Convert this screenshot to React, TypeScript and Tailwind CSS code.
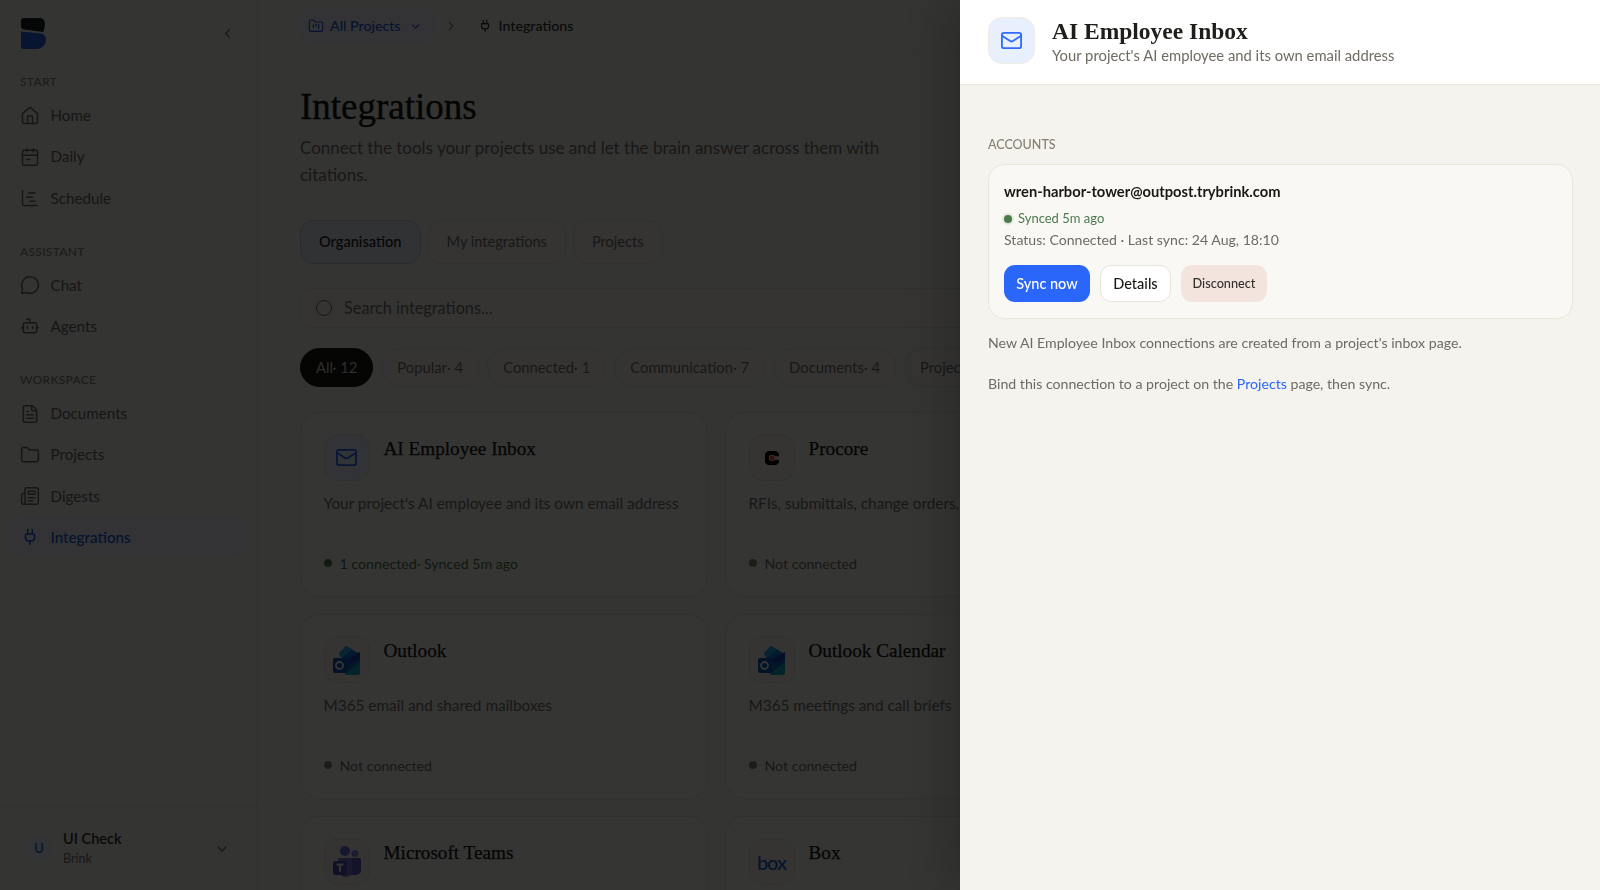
import {
  Bot,
  ChartGantt,
  ChevronDown,
  ChevronLeft,
  ChevronRight,
  FileText,
  Folder,
  FolderKanban,
  House,
  Mail,
  MessageCircle,
  Newspaper,
  Plug,
} from "lucide-react";
import type { ReactNode } from "react";

const sans = "font-['Lato','Liberation_Sans',sans-serif]";
const serif = "font-['Liberation_Serif',serif]";

function DailyIcon({ className }: { className?: string }) {
  return (
    <svg viewBox="0 0 24 24" fill="none" stroke="currentColor" strokeWidth="1.800" strokeLinecap="round" strokeLinejoin="round" className={className}>
      <path d="M8 2v4" />
      <path d="M16 2v4" />
      <rect x="3" y="4" width="18" height="18" rx="2" />
      <path d="M3 10h18" />
      <path d="M8 15h4" />
    </svg>
  );
}

function Logo() {
  return (
    <svg viewBox="0 0 25 31" className="h-[31px] w-[25px]">
      <path d="M3 0h15c3.500 0 6 2 6 5.500 0 3-1 6-1.500 8.500L3 11.500C1 11 0 10 0 8V3c0-2 1-3 3-3z" fill="#1a1d26" />
      <path d="M0 13.500 20 15.500c3 .5 5 3 5 6 0 5-4 9.500-9 9.500H2c-1.200 0-2-.8-2-2z" fill="#2b5fe0" />
    </svg>
  );
}

function OutlookLogo() {
  return (
    <svg viewBox="0 0 28 30" className="h-[30px] w-[28px]">
      <path d="M13 1 25 8v6L11 16 6 9z" fill="#0f78d4" />
      <path d="M6 8 13 1l6 3.500L9 13z" fill="#28a8ea" />
      <path d="M10 16 27 7v21H6z" fill="#0f6cbd" />
      <path d="M14 15 27 7v6L16 20z" fill="#1b3fc0" />
      <path d="M12 29 27 17v11a2 2 0 0 1-2 2H12z" fill="#14a7c9" />
      <rect x="0" y="13" width="14" height="15" rx="2" fill="#1257b8" />
      <circle cx="6.500" cy="20.500" r="3.500" fill="none" stroke="#fff" strokeWidth="1.800" />
    </svg>
  );
}

function TeamsLogo() {
  return (
    <svg viewBox="0 0 28 32" className="h-[32px] w-[28px]">
      <circle cx="12" cy="5" r="5" fill="#6d6fd2" />
      <circle cx="22" cy="7.500" r="3.500" fill="#8486e0" />
      <path d="M17 12h9a2 2 0 0 1 2 2v10a5 5 0 0 1-5 5h-6z" fill="#5a5cc4" />
      <path d="M5 12h14v13a6 6 0 0 1-6 6 8 8 0 0 1-8-8z" fill="#7577d8" />
      <rect x="0" y="15" width="14" height="14" rx="2" fill="#4b4db8" />
      <path d="M3.500 18.500h7M7 18.500v7.500" stroke="#fff" strokeWidth="1.800" fill="none" />
    </svg>
  );
}

function ProcoreLogo() {
  return (
    <svg viewBox="0 0 16 16" className="h-[14px] w-[14px]">
      <path d="M3 0h10l3 3v3h-4.500L10 4.500H6L4.500 6v4L6 11.500h4L11.500 10H16v3l-3 3H3l-3-3V3z" fill="#000" />
      <circle cx="8" cy="8" r="3" fill="#f0562a" />
    </svg>
  );
}

const sections = [
  {
    label: "Start",
    items: [
      { name: "Home", icon: <House className="h-[20px] w-[20px]" strokeWidth={1.8} /> },
      { name: "Daily", icon: <DailyIcon className="h-[20px] w-[20px]" /> },
      { name: "Schedule", icon: <ChartGantt className="h-[20px] w-[20px]" strokeWidth={1.8} /> },
    ],
  },
  {
    label: "Assistant",
    items: [
      { name: "Chat", icon: <MessageCircle className="h-[20px] w-[20px]" strokeWidth={1.8} /> },
      { name: "Agents", icon: <Bot className="h-[20px] w-[20px]" strokeWidth={1.8} /> },
    ],
  },
  {
    label: "Workspace",
    items: [
      { name: "Documents", icon: <FileText className="h-[20px] w-[20px]" strokeWidth={1.8} /> },
      { name: "Projects", icon: <Folder className="h-[20px] w-[20px]" strokeWidth={1.8} /> },
      { name: "Digests", icon: <Newspaper className="h-[20px] w-[20px]" strokeWidth={1.8} /> },
      { name: "Integrations", icon: <Plug className="h-[18px] w-[18px]" strokeWidth={2} />, active: true },
    ],
  },
];

const tabs = ["Organisation", "My integrations", "Projects"];
const chips = ["All· 12", "Popular· 4", "Connected· 1", "Communication· 7", "Documents· 4", "Projects"];

type Integration = { name: string; desc?: string; status?: string; connected?: boolean; icon: ReactNode; tint?: string };

const integrations: Integration[] = [
  {
    name: "AI Employee Inbox",
    desc: "Your project's AI employee and its own email address",
    status: "1 connected· Synced 5m ago",
    connected: true,
    tint: "bg-[#e8effd]",
    icon: <Mail className="h-[23px] w-[23px] text-[#2563f5]" strokeWidth={1.8} />,
  },
  {
    name: "Procore",
    desc: "RFIs, submittals, change orders,",
    status: "Not connected",
    icon: <ProcoreLogo />,
  },
  {
    name: "Outlook",
    desc: "M365 email and shared mailboxes",
    status: "Not connected",
    icon: <OutlookLogo />,
  },
  {
    name: "Outlook Calendar",
    desc: "M365 meetings and call briefs",
    status: "Not connected",
    icon: <OutlookLogo />,
  },
  {
    name: "Microsoft Teams",
    icon: <TeamsLogo />,
  },
  {
    name: "Box",
    icon: <span className={`${sans} text-[20px] font-medium leading-none tracking-[-1px] text-[#1a5fd0]`}>box</span>,
  },
];

function Sidebar() {
  return (
    <aside className="flex h-full w-[258px] shrink-0 flex-col border-r border-[#e4e0d6] bg-[#f6f4ef]">
      <div className="flex h-[66px] items-start justify-between pl-[21px] pr-[22px] pt-[18px]">
        <Logo />
        <ChevronLeft className="mt-[8px] h-[15px] w-[15px] text-[#77736a]" />
      </div>
      <nav className="flex-1 px-[9px] pt-[8px]">
        {sections.map((s) => (
          <div key={s.label} className="mb-[25px]">
            <div className="mb-[5px] h-[16px] pl-[11px] text-[12px] font-medium uppercase leading-[16px] tracking-[0.3px] text-[#8b8679]">{s.label}</div>
            {s.items.map((it) => (
              <div
                key={it.name}
                className={`flex h-[41.200px] items-center gap-[11px] rounded-[14px] pl-[10.500px] text-[15.200px] ${
                  "active" in it && it.active ? "bg-[#eff2f9] font-medium text-[#2455d8]" : "text-[#6f6b62]"
                }`}
              >
                <span className="flex w-[20px] justify-center">{it.icon}</span>
                {it.name}
              </div>
            ))}
          </div>
        ))}
      </nav>
      <div className="flex h-[84px] items-center border-t border-[#e9e5db] pl-[26px] pr-[27px]">
        <div className="flex h-[26px] w-[26px] items-center justify-center rounded-full bg-[#eaeefa] text-[13px] font-medium text-[#2455d8]">U</div>
        <div className="ml-[11px] flex-1">
          <div className="text-[14.500px] font-semibold leading-[20px] text-[#33312c]">UI Check</div>
          <div className="text-[12.500px] leading-[20px] text-[#77736a]">Brink</div>
        </div>
        <ChevronDown className="h-[16px] w-[16px] text-[#6f6b62]" />
      </div>
    </aside>
  );
}

function IntegrationCard({ item }: { item: Integration }) {
  return (
    <div className="flex h-[185px] flex-col rounded-[20px] border border-[#e4e0d6] bg-[#fbf9f6] px-[22.500px] pt-[21px]">
      <div className="flex gap-[14px]">
        <div className={`flex h-[47px] w-[46px] items-center justify-center rounded-[14px] border border-[#e8e4da] ${item.tint ?? "bg-[#f7f5f0]"}`}>{item.icon}</div>
        <div className={`${serif} pt-[3px] text-[19.200px] leading-[24px] text-[#191814] [-webkit-text-stroke:0.25px_#191814]`}>{item.name}</div>
      </div>
      {item.desc && <p className="mt-[11px] whitespace-nowrap text-[15.350px] leading-[22px] text-[#77736a]">{item.desc}</p>}
      {item.status && (
        <div className={`mt-auto mb-[22px] flex items-center gap-[8px] text-[14.200px] ${item.connected ? "text-[#4b7a4d]" : "text-[#77736a]"}`}>
          <span className={`h-[8px] w-[8px] rounded-full ${item.connected ? "bg-[#4b7a4d]" : "bg-[#8b8679]"}`} />
          {item.status}
        </div>
      )}
    </div>
  );
}

function Main() {
  return (
    <main className="min-w-0 flex-1 overflow-hidden bg-[#f6f4ef]">
      <header className="flex h-[53px] items-center gap-[6px] border-b border-[#efece4] pl-[39px] text-[14.200px]">
        <div className="flex h-[36px] items-center gap-[6px] rounded-full bg-[#eff2f9] pl-[11px] pr-[16px] font-medium text-[#2455d8]">
          <FolderKanban className="h-[16px] w-[16px]" strokeWidth={1.7} />
          All Projects
          <ChevronDown className="ml-[2px] h-[13px] w-[13px]" />
        </div>
        <ChevronRight className="h-[14px] w-[14px] text-[#8b8679]" />
        <div className="flex h-[34px] items-center gap-[7px] rounded-full pl-[14px] pr-[11px] font-medium text-[#33312c]">
          <Plug className="h-[14px] w-[14px]" />
          Integrations
        </div>
      </header>
      <div className="w-[1258px] pl-[42px] pt-[31px]">
        <h1 className={`${serif} text-[37px] leading-[46px] text-[#14130f] [-webkit-text-stroke:0.35px_#14130f]`}>Integrations</h1>
        <p className="mt-[4px] w-[620px] text-[17px] leading-[27px] text-[#77736a]">Connect the tools your projects use and let the brain answer across them with citations.</p>
        <div className="mt-[32px] flex gap-[7px]">
          {tabs.map((t, i) => (
            <div
              key={t}
              className={`flex h-[44px] items-center rounded-[14px] border px-[18px] text-[14.600px] ${
                i === 0 ? "border-[#bcc8e4] bg-[#e7ebf5] font-medium text-[#1f1e1a]" : "border-[#e4e0d6] bg-[#f8f6f1] text-[#77736a]"
              }`}
            >
              {t}
            </div>
          ))}
        </div>
        <div className="mt-[24px] flex h-[40px] w-[1216px] items-center gap-[12px] rounded-[10px] border border-[#e4e0d6] bg-[#f8f6f1] pl-[15px] text-[16.300px] text-[#77736a]">
          <span className="h-[16px] w-[16px] rounded-full border-[1.500px] border-[#6f6b62]" />
          Search integrations...
        </div>
        <div className="mt-[20px] flex gap-[8px]">
          {chips.map((c, i) => (
            <div
              key={c}
              className={`flex h-[39px] items-center whitespace-nowrap rounded-full border px-[15px] text-[14.800px] ${
                i === 0 ? "border-[#191814] bg-[#191814] text-[#d8d5cc]" : "border-[#e4e0d6] bg-[#f8f6f1] text-[#77736a]"
              }`}
            >
              {c}
            </div>
          ))}
        </div>
        <div className="mt-[25px] grid grid-cols-[408px_408px] gap-[17px]">
          {integrations.map((item) => (
            <IntegrationCard key={item.name} item={item} />
          ))}
        </div>
      </div>
    </main>
  );
}

function Panel() {
  return (
    <section className="absolute inset-y-0 right-0 flex w-[640px] flex-col bg-[#f5f3ee] shadow-[-12px_0_40px_rgba(0,0,0,0.18)]">
      <header className="flex h-[85px] shrink-0 items-start gap-[17px] border-b border-[#e9e6dc] bg-white pl-[28px] pt-[17px]">
        <div className="flex h-[47px] w-[47px] items-center justify-center rounded-[14px] border border-[#f0ece2] bg-[#e8effd]">
          <Mail className="h-[23px] w-[23px] text-[#2f6bff]" strokeWidth={1.9} />
        </div>
        <div>
          <h2 className={`${serif} text-[23.500px] font-semibold leading-[28px] text-[#1f1e1a]`}>AI Employee Inbox</h2>
          <p className="text-[14.800px] leading-[20px] text-[#6f6b62]">Your project's AI employee and its own email address</p>
        </div>
      </header>
      <div className="flex-1 px-[28px] pr-[27px] pt-[51px]">
        <div className="text-[12.500px] font-medium uppercase leading-[18px] text-[#857f70]">Accounts</div>
        <div className="mt-[10px] h-[155px] rounded-[16px] border border-[#ece6da] bg-[#faf8f4] px-[15px] pt-[16px]">
          <div className="text-[14.700px] font-bold leading-[20px] text-[#191814]">wren-harbor-tower@outpost.trybrink.com</div>
          <div className="mt-[9px] flex h-[18px] items-center gap-[4px] text-[13px] text-[#4b7a4d]">
            <span className="-ml-[2px] flex h-[12px] w-[12px] items-center justify-center rounded-full bg-[#e3e9df]">
              <span className="h-[8px] w-[8px] rounded-full bg-[#4b7a4d]" />
            </span>
            Synced 5m ago
          </div>
          <div className="mt-[2px] text-[14.100px] leading-[20px] text-[#6f6b62]">Status: Connected · Last sync: 24 Aug, 18:10</div>
          <div className="mt-[15px] flex gap-[10px]">
            <button className="h-[37px] w-[86px] rounded-[11px] bg-[#2b66fb] text-[14.500px] font-medium text-white">Sync now</button>
            <button className="h-[37px] w-[71px] rounded-[11px] border border-[#e9e4d8] bg-white text-[14.500px] font-medium text-[#191814]">Details</button>
            <button className="h-[37px] w-[86px] rounded-[11px] bg-[#f3e4de] text-[12.700px] font-medium text-[#33312c]">Disconnect</button>
          </div>
        </div>
        <p className="mt-[14px] text-[14.150px] leading-[20px] text-[#6f6b62]">New AI Employee Inbox connections are created from a project's inbox page.</p>
        <p className="mt-[21px] text-[14.150px] leading-[20px] text-[#6f6b62]">
          Bind this connection to a project on the <span className="text-[#2b66fb]">Projects</span> page, then sync.
        </p>
      </div>
    </section>
  );
}

export default function App() {
  return (
    <div className={`${sans} relative flex h-screen overflow-hidden`}>
      <Sidebar />
      <Main />
      <div className="absolute inset-0 bg-black/[0.79] backdrop-blur-[0.4px]" />
      <Panel />
    </div>
  );
}
